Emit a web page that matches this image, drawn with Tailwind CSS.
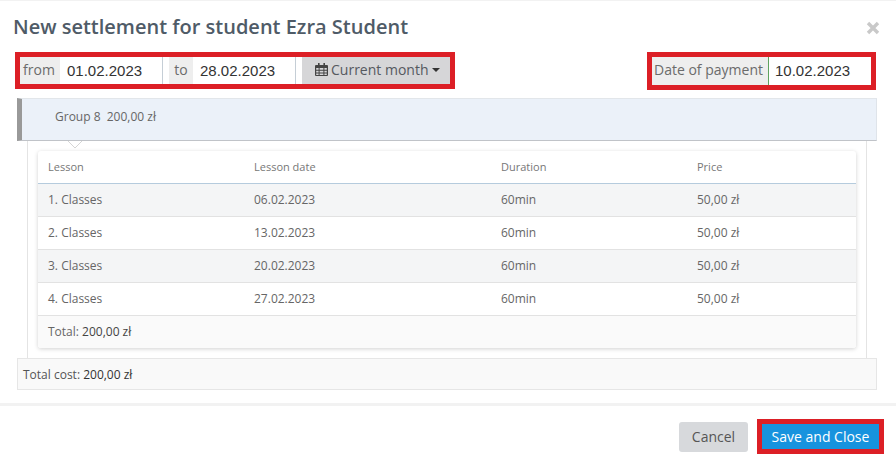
<!DOCTYPE html>
<html><head><meta charset="utf-8"><script src="https://cdn.jsdelivr.net/npm/@tailwindcss/browser@4"></script></head>
<body class="bg-white">
<div class="w-[896px] h-[465px] overflow-hidden font-['Open_Sans',sans-serif] text-[#555] flex flex-col">
  <div class="h-px bg-[#f2f2f2]"></div>
  <header class="h-[51px] pl-[13px] pr-[16px] flex items-center justify-between">
    <h1 class="text-[20px] leading-[24px] font-semibold text-[#4f5b67] mt-[1px]">New settlement for student Ezra Student</h1>
    <svg class="w-[14px] h-[14px] mt-[2px]" viewBox="0 0 14 14"><path d="M2 2 12 12M12 2 2 12" stroke="#c9c9c9" stroke-width="3.4" fill="none"/></svg>
  </header>
  <div class="h-[38px] pl-[15px] pr-[20px] flex justify-between">
    <div class="w-[440px] h-[37px] border-[5px] border-[#dc1f26] flex bg-white text-[14px]">
      <span class="w-[40px] bg-[#eeeeee] flex items-center justify-center text-[#6b6b6b] pb-[3px] pr-[2px]">from</span>
      <span class="w-[103px] border-r border-[#c5ced6] flex items-center pl-[7px] pt-[1px] font-['Liberation_Sans',sans-serif] text-[15px] text-[#333]">01.02.2023</span>
      <span class="w-[6px] bg-white"></span>
      <span class="w-[24px] bg-[#eeeeee] flex items-center justify-center text-[#6b6b6b] pb-[3px]">to</span>
      <span class="w-[103px] border-r border-[#c5ced6] flex items-center pl-[7px] pt-[1px] font-['Liberation_Sans',sans-serif] text-[15px] text-[#333]">28.02.2023</span>
      <span class="w-[6px] bg-white"></span>
      <span class="w-[148px] bg-[#d6d6d8] flex items-center pl-[13px] gap-[3px] text-[#55595f] pb-[2px]">
        <svg class="w-[13px] h-[13px] shrink-0" viewBox="0 0 13 13"><path fill="#444" d="M3 0h1.6v2H8.4V0H10v2h2a1 1 0 0 1 1 1v9a1 1 0 0 1-1 1H1a1 1 0 0 1-1-1V3a1 1 0 0 1 1-1h2zM1.2 5v1.8h2.4V5zm3.4 0v1.8h3.8V5zm4.8 0v1.8h2.4V5zM1.2 7.8v1.6h2.4V7.8zm3.4 0v1.6h3.8V7.8zm4.8 0v1.6h2.4V7.8zM1.2 10.4V12h2.4v-1.6zm3.4 0V12h3.8v-1.6zm4.8 0V12h2.4v-1.6z"/></svg>
        <span>Current month</span>
        <span class="ml-[1px] w-0 h-0 border-x-[4px] border-x-transparent border-t-[4px] border-t-[#333]"></span>
      </span>
    </div>
    <div class="w-[229px] h-[38px] border-[5px] border-[#dc1f26] flex text-[14px]">
      <span class="w-[117px] bg-[#eeeeee] border-r border-[#5fa35f] flex items-center pl-[2px] text-[#6b6b6b] pb-[3px]">Date of payment</span>
      <span class="flex-1 flex items-center pl-[6px] pt-[1px] font-['Liberation_Sans',sans-serif] text-[15px] text-[#333]">10.02.2023</span>
    </div>
  </div>
  <main class="mt-[8px] ml-[17px] w-[860px] text-[12px]">
    <div class="relative h-[43px] bg-[#ebf1f9] border-l-[5px] border-l-[#999] border-t border-t-[#e2e6ea] border-r border-r-[#dfe4ea] border-b border-b-[#c0c3c8] pl-[33px] flex items-center text-[#666] pb-[6px]">
      <span class="whitespace-pre">Group 8  200,00 zł</span>
      <svg class="absolute left-[46px] bottom-[-8px] w-[14px] h-[7px]" viewBox="0 0 14 7"><path d="M0 0 7 7 14 0" fill="#fff" stroke="#d5d5d5"/></svg>
    </div>
    <div class="mx-[10px] border-x border-[#e4e4e4] h-[217px] pt-[10px] px-[10px]">
      <div class="w-[818px] h-[197px] rounded-[3px] bg-white shadow-[0_1px_4px_rgba(0,0,0,0.18)] text-[#666]">
        <div class="h-[33px] grid grid-cols-[206px_247px_196px_1fr] items-center pl-[10px] border-b border-[#b5cbdd] text-[#777] text-[11px]">
          <span>Lesson</span><span>Lesson date</span><span>Duration</span><span>Price</span>
        </div>
        <div class="h-[33px] grid grid-cols-[206px_247px_196px_1fr] items-center pl-[10px] bg-[#f4f5f6] border-b border-[#e2e2e2] pb-[1px]">
          <span>1. Classes</span><span>06.02.2023</span><span>60min</span><span>50,00 zł</span>
        </div>
        <div class="h-[33px] grid grid-cols-[206px_247px_196px_1fr] items-center pl-[10px] border-b border-[#e2e2e2] pb-[1px]">
          <span>2. Classes</span><span>13.02.2023</span><span>60min</span><span>50,00 zł</span>
        </div>
        <div class="h-[33px] grid grid-cols-[206px_247px_196px_1fr] items-center pl-[10px] bg-[#f4f5f6] border-b border-[#e2e2e2] pb-[1px]">
          <span>3. Classes</span><span>20.02.2023</span><span>60min</span><span>50,00 zł</span>
        </div>
        <div class="h-[33px] grid grid-cols-[206px_247px_196px_1fr] items-center pl-[10px] border-b border-[#e2e2e2] pb-[1px]">
          <span>4. Classes</span><span>27.02.2023</span><span>60min</span><span>50,00 zł</span>
        </div>
        <div class="h-[32px] flex items-center pl-[10px] bg-[#fafafa] rounded-b-[3px] pb-[1px]">Total:&nbsp;<span class="font-medium text-[#444]">200,00 zł</span></div>
      </div>
    </div>
    <div class="h-[32px] bg-[#f9f9f9] border border-[#e6e6e6] flex items-center pl-[5px] text-[#555] pt-[1px]">Total cost:&nbsp;<span class="font-medium text-[#333]">200,00 zł</span></div>
  </main>
  <div class="mt-[13px] h-[3px] bg-[#f2f2f2]"></div>
  <footer class="flex justify-end items-center pr-[12px] pt-[13px] gap-[9px]">
    <span class="w-[69px] h-[30px] rounded-[3px] bg-[#d7d9dc] flex items-center justify-center text-[14px] text-[#555]">Cancel</span>
    <span class="w-[127px] h-[35px] border-[5px] border-[#dc1f26] bg-[#1793de] flex items-center justify-center text-[14px] font-medium text-white">Save and Close</span>
  </footer>
</div>
</body></html>
